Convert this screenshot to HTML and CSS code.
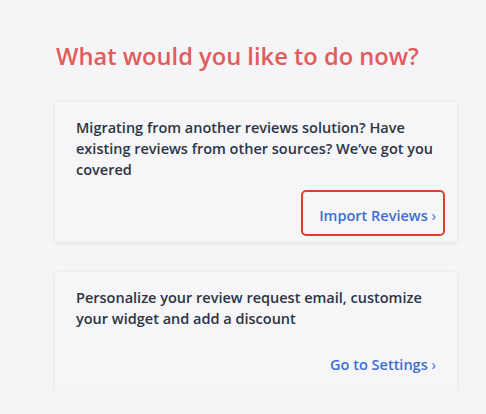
FILE: index.html
```html
<!DOCTYPE html>
<html>
<head>
<meta charset="utf-8">
<link rel="stylesheet" href="styles.css">
</head>
<body>
<main class="page">
  <h1 class="title">What would you like to do now?</h1>
  <section class="card">
    <p class="card-text">Migrating from another reviews solution? Have existing reviews from other sources? We’ve got you covered</p>
    <div class="card-actions">
      <a class="card-link highlighted" href="#">Import Reviews <span class="chev">›</span></a>
    </div>
  </section>
  <section class="card">
    <p class="card-text">Personalize your review request email, customize your widget and add a discount</p>
    <div class="card-actions">
      <a class="card-link" href="#">Go to Settings <span class="chev">›</span></a>
    </div>
  </section>
</main>
</body>
</html>
```

FILE: styles.css
```css
html, body {
  margin: 0;
  padding: 0;
  background: #f5f5f7;
}
body {
  font-family: "Open Sans", "DejaVu Sans", sans-serif;
  color: #2b3445;
}
.page {
  width: 402px;
  margin-left: 55px;
  padding-top: 40px;
  display: flex;
  flex-direction: column;
  gap: 30px;
}
.title {
  margin: 0 0 0 1px;
  font-size: 23.7px;
  line-height: 32px;
  font-weight: 600;
  color: #e25c5d;
}
.card {
  background: #f6f6f8;
  box-shadow: 0 1px 4px rgba(0,0,0,0.10);
  padding: 15px 21px 16px 21px;
  display: flex;
  flex-direction: column;
  gap: 25px;
}
.card-text {
  margin: 0;
  font-size: 14.5px;
  line-height: 21px;
  font-weight: 600;
}
.card-actions {
  display: flex;
  justify-content: flex-end;
}
.card-link {
  position: relative;
  font-size: 14.5px;
  line-height: 21px;
  font-weight: 600;
  color: #3b6fd1;
  text-decoration: none;
}
.chev {
  font-size: 15px;
  font-weight: 400;
}
.highlighted::after {
  content: "";
  position: absolute;
  left: -18px;
  right: -9px;
  top: -15px;
  bottom: -10px;
  border: 2px solid #d9412f;
  border-radius: 5px;
}
```
